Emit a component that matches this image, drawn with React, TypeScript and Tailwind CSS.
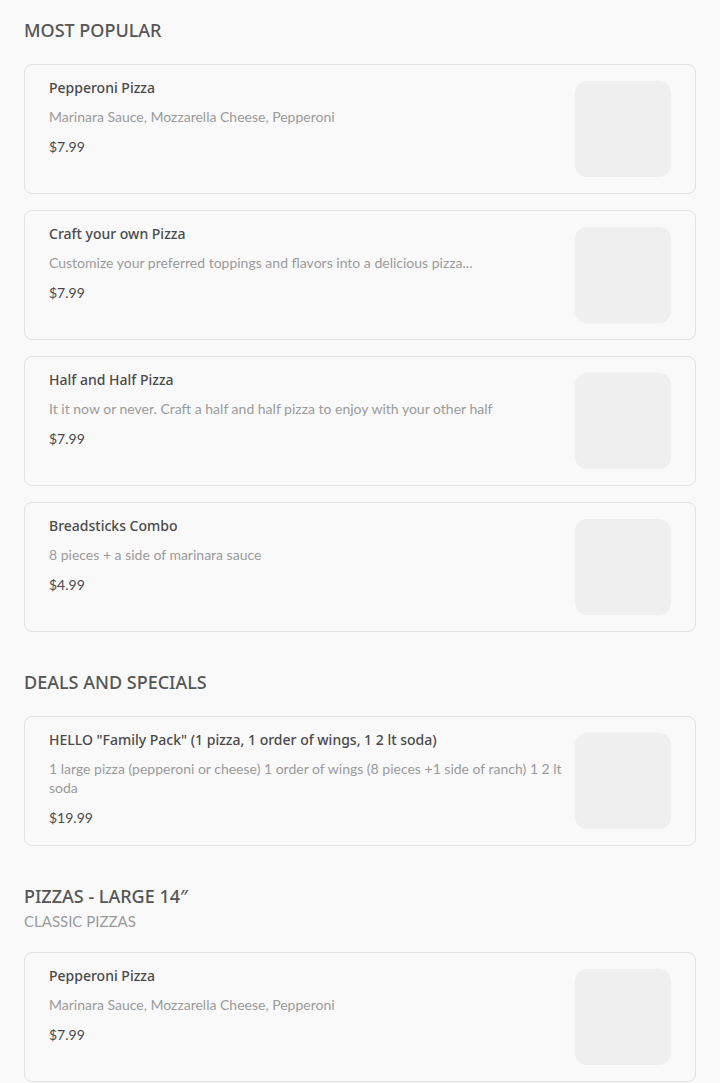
interface MenuItem {
  name: string;
  description: string;
  price: string;
}

interface MenuSection {
  title: string;
  subtitle?: string;
  items: MenuItem[];
}

const sections: MenuSection[] = [
  {
    title: "MOST POPULAR",
    items: [
      {
        name: "Pepperoni Pizza",
        description: "Marinara Sauce, Mozzarella Cheese, Pepperoni",
        price: "$7.99",
      },
      {
        name: "Craft your own Pizza",
        description: "Customize your preferred toppings and flavors into a delicious pizza...",
        price: "$7.99",
      },
      {
        name: "Half and Half Pizza",
        description: "It it now or never. Craft a half and half pizza to enjoy with your other half",
        price: "$7.99",
      },
      {
        name: "Breadsticks Combo",
        description: "8 pieces + a side of marinara sauce",
        price: "$4.99",
      },
    ],
  },
  {
    title: "DEALS AND SPECIALS",
    items: [
      {
        name: 'HELLO "Family Pack" (1 pizza, 1 order of wings, 1 2 lt soda)',
        description:
          "1 large pizza (pepperoni or cheese) 1 order of wings (8 pieces +1 side of ranch) 1 2 lt soda",
        price: "$19.99",
      },
    ],
  },
  {
    title: "PIZZAS - LARGE 14\u2033",
    subtitle: "CLASSIC PIZZAS",
    items: [
      {
        name: "Pepperoni Pizza",
        description: "Marinara Sauce, Mozzarella Cheese, Pepperoni",
        price: "$7.99",
      },
    ],
  },
];

const headFont = "font-['Noto_Sans',sans-serif]";
const bodyFont = "font-['Lato',sans-serif]";

function ItemCard({ item }: { item: MenuItem }) {
  return (
    <div className="flex items-start gap-2 rounded-lg border border-[#e2e2e2] bg-[#f9f9f9] py-4 pr-6 pl-6">
      <div className="min-w-0 flex-1">
        <p className={`${headFont} text-[14px] leading-[14px] font-medium text-[#4a4a4a]`}>
          {item.name}
        </p>
        <p className={`${bodyFont} mt-3 text-[14px] leading-[19px] text-[#9b9b9b]`}>
          {item.description}
        </p>
        <p className={`${bodyFont} mt-[11px] text-[14px] leading-[19px] text-[#4a4a4a]`}>
          {item.price}
        </p>
      </div>
      <div className="h-24 w-24 shrink-0 rounded-xl bg-[#efefef]" />
    </div>
  );
}

export default function App() {
  return (
    <div className="min-h-screen bg-[#f9f9f9] px-6 pt-[18px] pb-10">
      <div className="flex flex-col gap-[38px]">
        {sections.map((section) => (
          <section key={section.title}>
            <h2 className={`${headFont} text-[18px] leading-6 font-medium text-[#555555]`}>
              {section.title}
            </h2>
            {section.subtitle && (
              <p className={`${bodyFont} mt-1 text-[15px] leading-[18px] text-[#9b9b9b]`}>
                {section.subtitle}
              </p>
            )}
            <div className="mt-[22px] flex flex-col gap-4">
              {section.items.map((item, i) => (
                <ItemCard key={i} item={item} />
              ))}
            </div>
          </section>
        ))}
      </div>
    </div>
  );
}
